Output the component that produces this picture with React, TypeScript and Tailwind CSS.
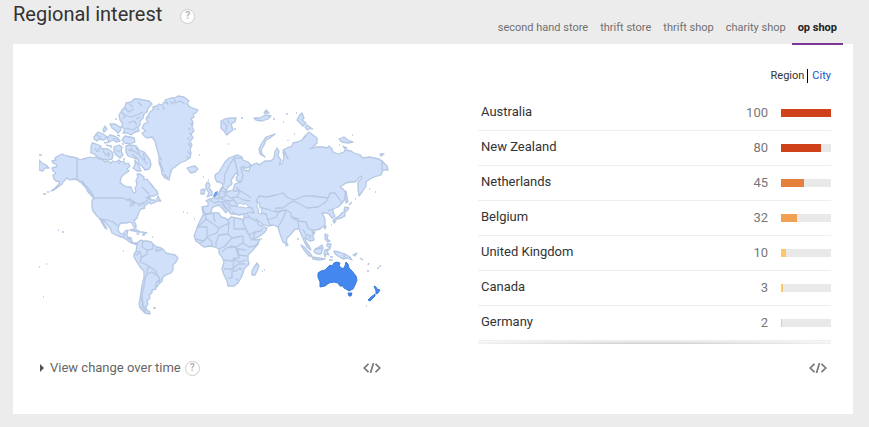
import { FC } from 'react';

type Region = {
   name: string;
   value: number;
   color: string;
};

const tabs = ['second hand store', 'thrift store', 'thrift shop', 'charity shop', 'op shop'];

const regions: Region[] = [
   { name: 'Australia', value: 100, color: 'bg-[#cf4118]' },
   { name: 'New Zealand', value: 80, color: 'bg-[#cf4118]' },
   { name: 'Netherlands', value: 45, color: 'bg-[#e5803c]' },
   { name: 'Belgium', value: 32, color: 'bg-[#f0a050]' },
   { name: 'United Kingdom', value: 10, color: 'bg-[#fbc767]' },
   { name: 'Canada', value: 3, color: 'bg-[#fbc767]' },
   { name: 'Germany', value: 2, color: 'bg-[#fbc767]' },
];

// coast lines, one entry per land mass
const land = [
   // North America
   'M77 158L80 160 83 159 87 158 90 157 93 158 96 157 99 159 102 159 105 162 108 161 111 163 113 161 116 162 119 160 121 162 124 161 125 164 128 163 130 166 127 169 129 171 126 173 123 175 121 178 120 182 123 185 127 187 131 187 132 190 134 193 136 192 135 188 137 185 136 180 138 177 137 174 140 174 144 177 144 180 147 179 149 182 151 184 154 188 157 191 158 194 154 196 149 196 146 198 150 197 151 200 155 200 156 202 151 204 149 202 146 205 144 206 145 208 141 209 139 212 138 215 137 218 134 221 136 225 136 228 134 227 132 223 129 222 127 223 121 223 119 225 118 230 120 233 123 234 125 231 128 230 127 234 127 237 131 238 132 242 135 243 138 243 137 245 134 244 131 243 127 240 122 237 118 236 112 233 110 228 106 223 103 220 102 221 105 225 107 229 105 228 102 223 100 219 97 216 93 211 92 207 92 200 94 199 91 195 88 192 86 188 83 184 80 182 78 180 74 179 70 180 67 178 64 181 62 184 58 187 54 190 51 191 55 188 58 185 60 182 56 181 54 179 53 175 56 173 53 171 52 168 56 167 57 165 53 163 52 161 56 160 55 158 58 156 62 154 67 156 72 157Z',
   // Newfoundland
   'M157 198L158 196 160 200 161 201 157 201Z',
   // South America
   'M138 242L141 240 143 241 147 241 151 242 154 245 157 247 161 248 164 250 166 253 170 254 175 255 178 258 176 262 173 265 173 270 171 273 166 275 163 277 162 281 159 284 157 287 155 286 156 289 152 290 152 293 149 295 150 298 147 301 148 304 146 307 147 310 150 312 150 314 145 313 141 309 139 304 140 299 141 292 142 285 144 278 144 271 140 267 137 262 134 257 134 254 136 251 137 246Z',
   // Greenland
   'M142 128L144 124 148 122 146 119 150 112 153 110 153 107 157 106 159 104 162 105 164 102 168 104 165 100 171 98 175 98 178 96 184 97 189 101 187 104 190 107 198 110 196 113 193 114 194 117 191 119 193 122 192 127 194 131 191 134 193 138 190 141 192 145 190 149 191 153 190 158 185 161 180 163 175 167 172 169 170 175 169 180 165 178 162 174 161 168 159 163 159 156 157 149 155 141 152 137 147 138 144 136 142 133 146 131Z',
   // Iceland
   'M187 168L190 167 195 166 198 169 195 172 191 173 189 171Z',
   // Canadian Arctic
   'M120 120L119 115 122 110 125 107 126 103 131 102 134 99 139 99 143 100 149 101 152 104 148 108 147 112 144 114 143 118 140 121 140 125 138 127 139 131 135 132 131 135 127 133 123 133 125 129 121 127 123 124Z',
   'M125 136L130 137 134 138 135 142 130 144 125 143 122 140Z',
   'M91 147L92 143 96 144 101 146 100 148 104 149 108 149 112 152 113 155 112 159 107 160 102 159 98 157 94 154 91 153Z',
   'M110 135L114 136 118 138 120 141 116 142 113 140 109 142 107 138Z',
   'M94 137L98 132 103 134 107 137 104 140 99 139 97 141 94 139Z',
   'M103 130L105 126 107 129 104 132Z M110 124L115 124 120 127 121 130 118 133 115 130 112 128Z',
   'M114 147L119 145 122 147 121 151 123 155 120 158 116 155 114 152Z',
   'M126 146L130 145 136 146 139 150 144 152 147 156 150 160 151 165 149 169 145 170 142 166 139 164 138 159 134 158 128 156 126 152Z',
   'M135 160L138 164 141 171 137 171 133 168 135 165Z',
   // Africa
   'M203 215L208 214 213 213 219 213 221 217 225 218 228 220 231 217 236 218 242 219 244 223 246 229 249 235 252 239 256 240 260 239 258 244 253 250 248 255 248 260 249 264 244 269 243 273 241 278 238 283 234 286 228 286 227 281 224 275 222 269 224 262 222 257 219 253 219 249 215 247 210 246 204 247 200 244 196 241 194 236 196 231 198 225 201 219Z',
   'M257 263L259 266 257 271 255 275 252 275 252 271 254 267Z',
   // Europe and Asia
   'M202 207L208 206 208 202 206 201 209 199 212 199 214 196 217 194 219 193 220 190 222 187 222 191 225 192 230 191 233 190 234 187 235 184 238 183 241 182 237 181 236 178 238 175 236 173 234 176 231 180 232 184 228 187 226 191 223 188 223 185 220 182 217 182 215 178 215 175 219 172 222 167 225 162 229 158 234 156 238 155 242 157 243 160 248 162 251 165 247 168 243 167 244 170 249 171 250 167 254 164 257 163 259 165 265 161 271 161 274 158 275 152 277 148 279 151 278 156 281 160 279 165 282 163 284 158 283 152 286 155 288 159 286 154 283 150 287 148 292 146 293 143 297 142 302 140 305 136 309 132 313 135 317 138 317 143 313 147 310 149 316 147 323 147 327 148 329 146 332 149 333 152 338 154 344 152 345 150 351 151 354 153 360 155 363 158 369 157 374 158 379 159 383 162 387 166 388 170 383 170 381 175 374 177 370 179 366 182 366 186 362 192 359 196 358 188 358 182 362 178 361 176 355 182 350 182 346 183 340 187 343 189 346 193 345 199 342 203 338 207 333 209 333 212 335 216 332 218 329 214 326 213 322 213 325 219 325 225 320 229 316 230 312 230 313 235 314 240 310 241 308 240 305 237 306 242 309 246 311 250 307 247 304 241 302 236 299 229 295 229 291 234 287 238 286 244 283 242 280 234 278 227 273 225 268 226 262 224 258 221 256 219 259 225 263 226 267 228 265 232 260 236 252 240 249 235 246 229 243 223 244 218 244 214 239 215 235 214 233 212 234 214 231 214 228 210 224 205 222 203 224 207 228 210 226 213 223 209 219 205 215 206 212 208 211 212 208 214 203 213Z',
   // British Isles
   'M206 184L208 182 210 185 209 188 212 192 212 195 207 197 209 193 207 190 206 187Z M201 190L205 189 204 194 201 194Z',
   // Svalbard, Franz Josef Land
   'M221 121L225 119 231 118 236 118 235 122 231 124 233 130 230 132 227 135 224 131 221 128Z',
   'M254 118L260 118 265 115 271 116 268 119 262 121 256 120Z M266 110L269 113 264 113Z',
   // Novaya Zemlya
   'M275 134L270 138 266 140 264 145 261 150 262 154 265 157 260 154 259 149 262 143 266 137Z',
   // Severnaya Zemlya, New Siberian Islands
   'M299 116L302 113 304 118 302 120 306 123 303 126 299 122 297 120Z M307 125L311 128 307 130 305 127Z',
   'M339 139L344 137 348 140 353 142 348 143 342 142Z M343 146L347 148 345 149Z',
   'M380 154L384 154 381 156Z M39 160L42 163 46 165 49 168 45 168 43 171 39 170Z',
   // Sakhalin and Japan
   'M346 191L347 197 348 202 346 203 345 196Z',
   'M345 207L349 208 347 211 344 210Z M345 211L345 216 341 218 337 219 334 219 339 216 342 213Z M333 220L336 221 334 223Z',
   // Sri Lanka, Taiwan, Hainan
   'M287 243L288 245 286 246Z M324 227L326 226 325 229Z M313 232L315 232 314 234Z',
   // Indonesia, Philippines, New Guinea
   'M301 245L304 247 308 251 312 256 309 256 304 250Z M312 257L319 258 325 259 319 260 313 259Z',
   'M315 249L319 247 322 245 323 248 321 254 317 254 314 252Z M325 250L330 249 327 251 329 255 326 254 325 257 324 253Z',
   'M325 234L328 235 327 239 330 241 328 242 325 239Z M327 244L331 244 330 248 327 246Z',
   'M334 251L339 252 345 254 350 257 352 260 347 258 343 259 338 256 335 254Z M353 255L357 253 355 256Z',
   // Caribbean
   'M130 230L135 229 141 232 138 232Z M142 232L147 233 144 234Z M137 234L139 234Z',
];

const borders = [
   'M77 158V179L80 182',
   'M93 198H123L128 200 133 202 138 204 145 202 150 198',
   'M126 200L130 199 135 202 131 203 130 207M132 206L135 203M138 206L145 203',
   'M99 219L107 220 113 222 118 226M123 238L125 234M127 239L131 239M130 242L132 240',
   'M80 182L82 181 85 185 88 188 91 192 94 197',
   // South America
   'M143 241L142 247 147 250 147 254 141 258 140 262 145 264 150 267 156 271 157 275 160 279 159 283M136 251L141 253 141 258M147 250L153 249 153 244M157 247L156 251 162 250M150 267L147 269 147 274 145 279 144 286 142 294 142 302 145 309M147 274L152 272 156 275M160 279L156 283 157 287M134 254L137 255 140 251',
   // Africa
   'M205 215L206 219 198 227H207V237L204 241 195 239M206 219L219 228 229 223 228 220M213 213L215 222M219 228L217 233 208 236M229 223L228 234 232 238 243 236M234 218V229H245M228 234L219 235 216 242 216 246M207 237L212 242 212 246M200 243L204 241M219 249L225 246 230 240 232 238M230 246L236 247 243 243 243 236M243 243L249 247 255 246 258 243M222 252L226 248 233 247 238 249 239 258 234 258 232 261 224 260M236 247L238 255 247 256M238 249L246 250M224 269H233L234 259 239 262 246 260M228 278L232 278 232 271 236 271 240 268 242 270M233 269L238 264 245 264M236 280L237 279 238 281',
   // Europe
   'M224 184L225 174 230 164 234 158M238 174L236 165 234 158 242 158M241 182L243 176 241 168 243 166M209 200L215 203 219 201M219 193L219 198 224 200 229 201 233 200M227 191L226 195 231 198 237 197 240 191 236 187M221 199L225 196M228 201L231 206 237 206M224 201L228 205 231 210M237 197L244 200 250 201M233 191L240 191 246 194 251 198M203 208L204 213M233 199L237 204M218 202L224 202M214 198L219 199',
   // Asia
   'M244 214L250 212 254 213 252 208 247 207M244 218L249 217 256 221M247 213L249 217M249 235L255 232 261 231 263 228M259 213L266 214 268 220 270 225M260 204L256 201 259 196 267 197 276 195 283 193 288 198 295 200M259 207L267 209 275 212 276 208 283 208 288 204 293 201M268 220L276 217 279 212 286 210 291 213 291 217 298 221 306 222M276 212L285 210M278 227L281 222 284 216 286 210M293 201L300 204 307 208 318 207 326 202 328 198 320 197 313 196 304 196 297 199 293 201M328 198L330 193 335 193 342 203M298 221L299 228M306 222L308 228 312 230M303 229L306 235 311 236 309 239M333 209L328 211M291 217L299 219M382 160V170M255 232L253 239',
   'M344 253V259M316 249L322 248',
];

// rough edges inside coasts with many fjords and small islands
const fjords =
   'M157 110L159 108M163 106L164 110M170 101L172 104 176 100M175 103L180 101 185 104M190 123L193 126M189 133L192 135M188 143L191 147M187 151L190 154M160 157L162 161M161 165L164 172M164 174L168 178M147 118L150 117M125 108L129 112 134 109M124 115L131 117 137 115 143 112M128 123L134 121 137 125M126 128L133 130 137 127M103 151L106 155 110 154M98 148L99 152M97 135L101 138M128 150L134 151 138 154 143 159 147 164M132 154L138 159M113 138L118 140M223 122L227 126 226 131M228 120L229 124M141 296L143 302 142 306 146 311M139 307L145 312M82 184L85 186M87 190L91 194M142 187L149 194M122 112L125 116 123 119M129 104L133 107M138 102L142 106M136 119L140 117M188 128L191 130M189 137L188 140M186 156L189 158M160 162L162 167M131 147L132 151M136 148L140 154M116 150L120 152M95 148L97 152M108 152L109 157M143 153L145 160';

const islets =
   'M39 155h3M43 194h3M47 192h2M115 119h2M36 194h1M199 155h1M203 177h1M208 180h1M228 144h1M234 129h2M241 118h2M273 119h2M283 122h1M286 114h2M283 122h1M296 113h1M311 129h2M294 134h1M288 140v1M305 137h1M352 135h1M339 145h1M369 189h1M375 192h1M183 212h1M187 213h1M194 219h1M58 230h1M62 232h2M46 264h1M39 267h1M43 297h1M123 251h1M153 308h3M152 237h1M262 271h1M264 270h1M368 265l1 -2M367 271h2M377 268h2M379 266h2M360 258l3 2M142 235h3M331 225h1M334 222h1M352 202l-3 3M355 199h1M298 238v2M261 239h1M330 257h3M333 260h-4M366 306h1M122 144h2M123 159h2M106 145l4 1M104 143l5 -1M111 145v3M117 135l3 1M119 162v2';

const WorldMap: FC = () => {
   return (
      <svg
         viewBox="39 95 350 221"
         className="block w-full max-w-[350px]"
         role="img"
         aria-label="Interest by region"
         strokeLinejoin="round"
      >
         <g stroke="#b5c7e3" strokeWidth="1.3">
            {land.map((d) => (
               <path key={d} d={d} fill="#d0e0fa" />
            ))}
            {borders.map((d) => (
               <path key={d} d={d} fill="none" />
            ))}
            <path d={fjords} fill="none" />
            <path d={islets} fill="none" strokeWidth="1.5" />
         </g>
         {/* inland seas */}
         <g fill="#fff" stroke="#b5c7e3" strokeWidth="1">
            <path d="M237 207L238 204 241 203 244 205 245 203 249 207 246 208 241 207Z" />
            <path d="M257 203L260 203 259 206 262 210 261 214 258 213 259 210 257 207Z" />
         </g>
         <path d="M220 191L224 191 225 196 221 198 219 195Z" fill="#cbdcf8" stroke="#b5c7e3" />
         <path d="M213 196L215 192 218 191 217 195 215 197Z" fill="#6f9fe7" />
         <g fill="#4387ef" stroke="#397bdc" strokeWidth="1">
            <path d="M318 273L321 271 325 270 328 267 330 265 332 266 334 263 337 262 340 263 339 266 343 269 345 266 346 262 348 264 349 268 352 271 356 276 357 280 355 285 353 289 349 291 346 289 344 288 343 286 340 286 338 283 334 282 329 283 325 286 320 287 320 282 318 277Z" />
            <path d="M348 293L352 293 351 296 349 296Z" />
            <path d="M374 286L376 287 377 289 380 290 378 293 376 294 376 291Z M375 294L375 296 370 301 368 300 371 297Z" />
         </g>
      </svg>
   );
};

const HelpButton: FC<{ label: string }> = ({ label }) => {
   return (
      <button
         type="button"
         aria-label={label}
         className="flex size-[15px] shrink-0 items-center justify-center rounded-full border border-[#cccccc] bg-white text-[10px] leading-none font-medium text-[#aaaaaa]"
      >
         ?
      </button>
   );
};

const EmbedButton: FC = () => {
   return (
      <button type="button" aria-label="Embed" className="flex h-5 items-center">
         <svg width="18" height="10" viewBox="0 0 18 10" fill="none" stroke="#777" strokeWidth="1.7">
            <path d="M5.5 0.8L1.2 5l4.3 4.2M12.5 0.8L16.8 5l-4.3 4.2M10.5 0L7.5 10" />
         </svg>
      </button>
   );
};

const RegionTable: FC = () => {
   return (
      <table className="w-full border-separate border-spacing-0 text-[13px] leading-5">
         <tbody>
            {regions.map((region) => (
               <tr key={region.name} className="h-[35px]">
                  <th
                     scope="row"
                     className="border-b border-[#eeeef2] pb-[2px] pl-[3px] text-left font-normal text-[#333333]"
                  >
                     {region.name}
                  </th>
                  <td className="w-16 border-b border-[#eeeef2] pr-[13px] text-right text-[#777777]">{region.value}</td>
                  <td className="w-[50px] border-b border-[#eeeef2]">
                     <div className="h-2 bg-[#e9e9e9]">
                        <div className={`h-2 ${region.color}`} style={{ width: `${region.value}%` }} />
                     </div>
                  </td>
               </tr>
            ))}
         </tbody>
      </table>
   );
};

const App: FC = () => {
   return (
      <div className="min-h-screen bg-[#ececec] pr-4 pb-[13px] pl-[13px] font-[Roboto,sans-serif]">
         <header className="flex h-11 items-start justify-between pr-[10px]">
            <div className="flex items-center gap-[18px]">
               <h1 className="text-[20px] leading-7 text-[#333333]">Regional interest</h1>
               <div className="pt-1">
                  <HelpButton label="About regional interest" />
               </div>
            </div>
            <nav className="flex h-[45px] text-[11px] leading-4">
               {tabs.map((tab) => (
                  <a
                     key={tab}
                     href="#"
                     className={
                        tab === 'op shop'
                           ? 'relative border-b-2 border-[#7e3794] px-[6px] pt-5 font-bold text-[#222222]'
                           : 'px-[6px] pt-5 text-[#707070]'
                     }
                  >
                     {tab}
                  </a>
               ))}
            </nav>
         </header>

         <main className="flex justify-between bg-white pr-[22px] pb-9 pl-[26px]">
            <section className="w-[350px] pt-[51px]">
               <WorldMap />
               <div className="mt-[42px] flex items-center justify-between pr-2">
                  <div className="flex items-center gap-1 pl-px">
                     <button type="button" className="flex items-center gap-[6px] text-[13px] leading-5 text-[#666666]">
                        <svg width="4" height="8" viewBox="0 0 4 8" fill="#555">
                           <path d="M0 0L4 4L0 8Z" />
                        </svg>
                        View change over time
                     </button>
                     <HelpButton label="About change over time" />
                  </div>
                  <EmbedButton />
               </div>
            </section>

            <section className="w-[353px] pt-[25px]">
               <div className="flex justify-end text-[11px] leading-[14px]">
                  <span className="border-r border-black pr-[3px] text-[#333333]">Region</span>
                  <a href="#" className="pl-1 text-[#1155cc]">
                     City
                  </a>
               </div>
               <div className="pt-[13px]">
                  <RegionTable />
                  <div className="h-[3px] bg-radial-[ellipse_at_bottom] from-[#cccccc] to-white" />
               </div>
               <div className="mt-[14px] flex justify-end pr-1">
                  <EmbedButton />
               </div>
            </section>
         </main>
      </div>
   );
};

export default App;
